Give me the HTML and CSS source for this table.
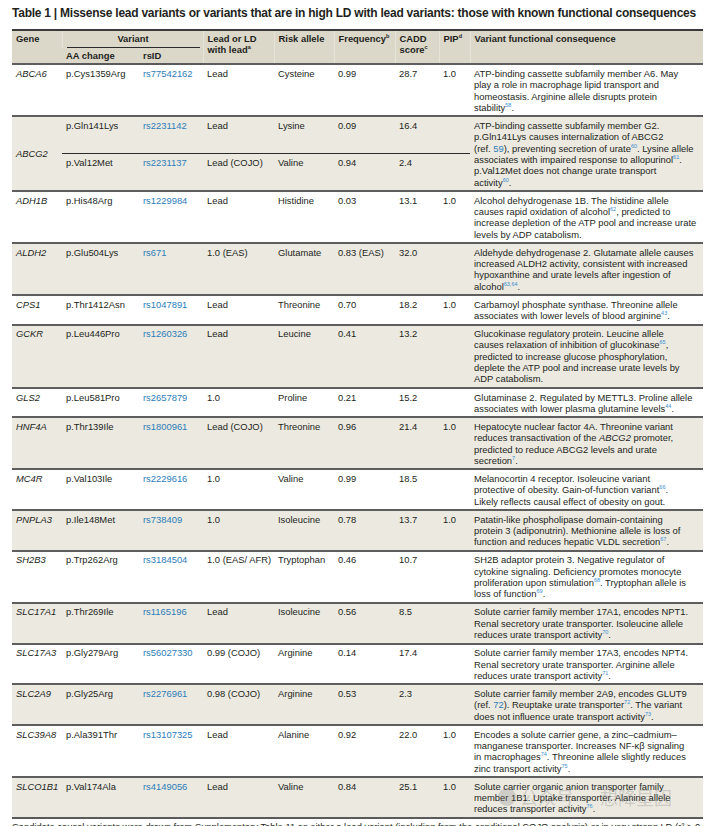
FILE: index.html
```html
<!DOCTYPE html>
<html lang="en">
<head>
<meta charset="utf-8">
<title>Table 1</title>
<link rel="stylesheet" href="styles.css">
</head>
<body>
<div class="page">
  <h1 class="title">Table 1 | Missense lead variants or variants that are in high LD with lead variants: those with known functional consequences</h1>
  <table class="tbl">
    <colgroup>
      <col class="c-gene"><col class="c-aa"><col class="c-rs"><col class="c-lead"><col class="c-risk"><col class="c-freq"><col class="c-cadd"><col class="c-pip"><col class="c-cons">
    </colgroup>
    <thead>
      <tr class="h1">
        <th rowspan="2">Gene</th>
        <th colspan="2" class="variant"><div class="variant-label">Variant</div></th>
        <th rowspan="2">Lead or LD<br>with lead<sup>a</sup></th>
        <th rowspan="2">Risk allele</th>
        <th rowspan="2">Frequency<sup>b</sup></th>
        <th rowspan="2">CADD<br>score<sup>c</sup></th>
        <th rowspan="2">PIP<sup>d</sup></th>
        <th rowspan="2">Variant functional consequence</th>
      </tr>
      <tr class="h2">
        <th>AA change</th>
        <th>rsID</th>
      </tr>
    </thead>
    <tbody>
      <tr class="row">
        <td class="gene">ABCA6</td><td>p.Cys1359Arg</td><td class="rs">rs77542162</td><td>Lead</td><td>Cysteine</td><td>0.99</td><td>28.7</td><td>1.0</td>
        <td class="cons">ATP-binding cassette subfamily member A6. May<br>play a role in macrophage lipid transport and<br>homeostasis. Arginine allele disrupts protein<br>stability<sup class="ref">58</sup>.</td>
      </tr>
      <tr class="row shade">
        <td class="gene mid" rowspan="2">ABCG2</td><td>p.Gln141Lys</td><td class="rs">rs2231142</td><td>Lead</td><td>Lysine</td><td>0.09</td><td>16.4</td><td></td>
        <td class="cons" rowspan="2">ATP-binding cassette subfamily member G2.<br>p.Gln141Lys causes internalization of ABCG2<br>(ref. <span class="rs">59</span>), preventing secretion of urate<sup class="ref">60</sup>. Lysine allele<br>associates with impaired response to allopurinol<sup class="ref">61</sup>.<br>p.Val12Met does not change urate transport<br>activity<sup class="ref">60</sup>.</td>
      </tr>
      <tr class="sub shade">
        <td>p.Val12Met</td><td class="rs">rs2231137</td><td>Lead (COJO)</td><td>Valine</td><td>0.94</td><td>2.4</td><td></td>
      </tr>
      <tr class="row">
        <td class="gene">ADH1B</td><td>p.His48Arg</td><td class="rs">rs1229984</td><td>Lead</td><td>Histidine</td><td>0.03</td><td>13.1</td><td>1.0</td>
        <td class="cons">Alcohol dehydrogenase 1B. The histidine allele<br>causes rapid oxidation of alcohol<sup class="ref">62</sup>, predicted to<br>increase depletion of the ATP pool and increase urate<br>levels by ADP catabolism.</td>
      </tr>
      <tr class="row shade">
        <td class="gene">ALDH2</td><td>p.Glu504Lys</td><td class="rs">rs671</td><td>1.0 (EAS)</td><td>Glutamate</td><td>0.83 (EAS)</td><td>32.0</td><td></td>
        <td class="cons">Aldehyde dehydrogenase 2. Glutamate allele causes<br>increased ALDH2 activity, consistent with increased<br>hypoxanthine and urate levels after ingestion of<br>alcohol<sup class="ref">63,64</sup>.</td>
      </tr>
      <tr class="row">
        <td class="gene">CPS1</td><td>p.Thr1412Asn</td><td class="rs">rs1047891</td><td>Lead</td><td>Threonine</td><td>0.70</td><td>18.2</td><td>1.0</td>
        <td class="cons">Carbamoyl phosphate synthase. Threonine allele<br>associates with lower levels of blood arginine<sup class="ref">43</sup>.</td>
      </tr>
      <tr class="row shade">
        <td class="gene">GCKR</td><td>p.Leu446Pro</td><td class="rs">rs1260326</td><td>Lead</td><td>Leucine</td><td>0.41</td><td>13.2</td><td></td>
        <td class="cons">Glucokinase regulatory protein. Leucine allele<br>causes relaxation of inhibition of glucokinase<sup class="ref">65</sup>,<br>predicted to increase glucose phosphorylation,<br>deplete the ATP pool and increase urate levels by<br>ADP catabolism.</td>
      </tr>
      <tr class="row">
        <td class="gene">GLS2</td><td>p.Leu581Pro</td><td class="rs">rs2657879</td><td>1.0</td><td>Proline</td><td>0.21</td><td>15.2</td><td></td>
        <td class="cons">Glutaminase 2. Regulated by METTL3. Proline allele<br>associates with lower plasma glutamine levels<sup class="ref">44</sup>.</td>
      </tr>
      <tr class="row shade">
        <td class="gene">HNF4A</td><td>p.Thr139Ile</td><td class="rs">rs1800961</td><td>Lead (COJO)</td><td>Threonine</td><td>0.96</td><td>21.4</td><td>1.0</td>
        <td class="cons">Hepatocyte nuclear factor 4A. Threonine variant<br>reduces transactivation of the <i>ABCG2</i> promoter,<br>predicted to reduce ABCG2 levels and urate<br>secretion<sup class="ref">7</sup>.</td>
      </tr>
      <tr class="row">
        <td class="gene">MC4R</td><td>p.Val103Ile</td><td class="rs">rs2229616</td><td>1.0</td><td>Valine</td><td>0.99</td><td>18.5</td><td></td>
        <td class="cons">Melanocortin 4 receptor. Isoleucine variant<br>protective of obesity. Gain-of-function variant<sup class="ref">66</sup>.<br>Likely reflects causal effect of obesity on gout.</td>
      </tr>
      <tr class="row shade">
        <td class="gene">PNPLA3</td><td>p.Ile148Met</td><td class="rs">rs738409</td><td>1.0</td><td>Isoleucine</td><td>0.78</td><td>13.7</td><td>1.0</td>
        <td class="cons">Patatin-like phospholipase domain-containing<br>protein 3 (adiponutrin). Methionine allele is loss of<br>function and reduces hepatic VLDL secretion<sup class="ref">67</sup>.</td>
      </tr>
      <tr class="row">
        <td class="gene">SH2B3</td><td>p.Trp262Arg</td><td class="rs">rs3184504</td><td>1.0 (EAS/ AFR)</td><td>Tryptophan</td><td>0.46</td><td>10.7</td><td></td>
        <td class="cons">SH2B adaptor protein 3. Negative regulator of<br>cytokine signaling. Deficiency promotes monocyte<br>proliferation upon stimulation<sup class="ref">68</sup>. Tryptophan allele is<br>loss of function<sup class="ref">69</sup>.</td>
      </tr>
      <tr class="row shade">
        <td class="gene">SLC17A1</td><td>p.Thr269Ile</td><td class="rs">rs1165196</td><td>Lead</td><td>Isoleucine</td><td>0.56</td><td>8.5</td><td></td>
        <td class="cons">Solute carrier family member 17A1, encodes NPT1.<br>Renal secretory urate transporter. Isoleucine allele<br>reduces urate transport activity<sup class="ref">70</sup>.</td>
      </tr>
      <tr class="row">
        <td class="gene">SLC17A3</td><td>p.Gly279Arg</td><td class="rs">rs56027330</td><td>0.99 (COJO)</td><td>Arginine</td><td>0.14</td><td>17.4</td><td></td>
        <td class="cons">Solute carrier family member 17A3, encodes NPT4.<br>Renal secretory urate transporter. Arginine allele<br>reduces urate transport activity<sup class="ref">71</sup>.</td>
      </tr>
      <tr class="row shade">
        <td class="gene">SLC2A9</td><td>p.Gly25Arg</td><td class="rs">rs2276961</td><td>0.98 (COJO)</td><td>Arginine</td><td>0.53</td><td>2.3</td><td></td>
        <td class="cons">Solute carrier family member 2A9, encodes GLUT9<br>(ref. <span class="rs">72</span>). Reuptake urate transporter<sup class="ref">72</sup>. The variant<br>does not influence urate transport activity<sup class="ref">73</sup>.</td>
      </tr>
      <tr class="row">
        <td class="gene">SLC39A8</td><td>p.Ala391Thr</td><td class="rs">rs13107325</td><td>Lead</td><td>Alanine</td><td>0.92</td><td>22.0</td><td>1.0</td>
        <td class="cons">Encodes a solute carrier gene, a zinc–cadmium–<br>manganese transporter. Increases NF-κβ signaling<br>in macrophages<sup class="ref">74</sup>. Threonine allele slightly reduces<br>zinc transport activity<sup class="ref">75</sup>.</td>
      </tr>
      <tr class="row shade last">
        <td class="gene">SLCO1B1</td><td>p.Val174Ala</td><td class="rs">rs4149056</td><td>Lead</td><td>Valine</td><td>0.84</td><td>25.1</td><td>1.0</td>
        <td class="cons">Solute carrier organic anion transporter family<br>member 1B1. Uptake transporter. Alanine allele<br>reduces transporter activity<sup class="ref">76</sup>.</td>
      </tr>
    </tbody>
  </table>
  <p class="foot">Candidate causal variants were drawn from Supplementary Table 11 as either a lead variant (including from the conditional COJO analysis) or in very strong LD (r² &gt; 0.90) with a lead variant.</p>
  <div class="watermark"><span class="wm-logo"></span>公众号 · 想降星因</div>
</div>
</body>
</html>
```
FILE: styles.css
```css
html, body {
  margin: 0;
  padding: 0;
  background: #ffffff;
}
body {
  font-family: "Liberation Sans", Arial, sans-serif;
  color: #231f20;
  overflow: hidden;
}
.page {
  position: relative;
  padding: 5px 10px 0 12px;
  width: 691px;
}
.title {
  margin: 0 0 8px;
  font-size: 12px;
  line-height: 16px;
  font-weight: bold;
  letter-spacing: -0.24px;
  white-space: nowrap;
}
.tbl {
  width: 691px;
  border-collapse: collapse;
  table-layout: fixed;
  font-size: 9.4px;
  line-height: 11.32px;
}
.c-gene { width: 50px; }
.c-aa { width: 77px; }
.c-rs { width: 64px; }
.c-lead { width: 71px; }
.c-risk { width: 60px; }
.c-freq { width: 61px; }
.c-cadd { width: 44px; }
.c-pip { width: 31px; }
.c-cons { width: 233px; }

thead th {
  background: #dcd8c9;
  text-align: left;
  vertical-align: top;
  font-weight: bold;
  padding: 1.5px 4px 0;
  white-space: nowrap;
  border-left: 1px solid #e6e3d8;
  line-height: 11.2px;
}
thead th:first-child { border-left: none; }
.h1 th {
  border-top: 2px solid #3a3a3a;
}
.h2 th {
  padding: 2px 4px 2.5px;
  border-bottom: 2px solid #5a5a5a;
  border-left: none;
}
.h2 th + th { border-left: none; }
thead th sup {
  font-size: 5.5px;
  line-height: 0;
  vertical-align: 4px;
}
th.variant {
  padding: 1.5px 3px 0 4px;
}
.variant-label {
  text-align: center;
  padding-bottom: 3px;
  border-bottom: 1px solid #2a2a2a;
}
tbody td {
  vertical-align: top;
  padding: 2.5px 4px 2.3px;
  white-space: nowrap;
}
tr.row td {
  border-top: 2px solid #5e5e5e;
}
tr.sub td {
  border-top: 1px solid #2a2a2a;
}
tr.shade td {
  background: #ebe9e0;
}
tr.last td {
  border-bottom: 2px solid #5a5a5a;
}
td.gene { font-style: italic; }
td.gene.mid { vertical-align: middle; }
.rs { color: #2b7db9; }
sup.ref {
  color: #3a8fd0;
  font-size: 5.5px;
  line-height: 0;
  vertical-align: 4px;
}
.foot {
  margin: 2px 0 0;
  font-size: 9.4px;
  line-height: 11.3px;
  white-space: nowrap;
  overflow: hidden;
  width: 691px;
}
.watermark {
  position: absolute;
  left: 498px;
  top: 786px;
  font-family: "Noto Sans CJK SC", sans-serif;
  font-size: 18px;
  line-height: 22px;
  color: rgba(120, 120, 120, 0.28);
  white-space: nowrap;
  display: flex;
  align-items: center;
  gap: 4px;
}
.wm-logo {
  width: 18px;
  height: 18px;
  border-radius: 50%;
  background: rgba(120, 120, 120, 0.25);
}
```
